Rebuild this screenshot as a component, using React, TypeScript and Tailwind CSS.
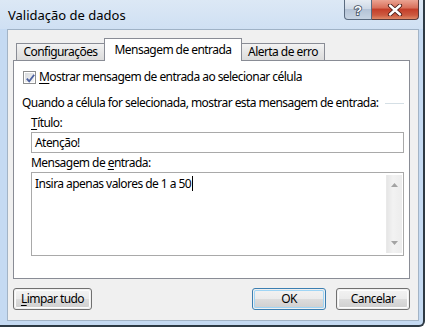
import React from "react";

const font = { fontFamily: '"Noto Sans", "Liberation Sans", sans-serif' };

function HelpBtn() {
  return (
    <div className="w-[28px] h-[20px] border border-t-0 border-[#5a6b80] rounded-bl-[4px] bg-[linear-gradient(#e6ecf3,#cfd9e6_45%,#b4c3d6_50%,#c7d4e3)] flex items-center justify-center">
      <svg width="12" height="14" viewBox="0 0 12 14">
        <text x="6" y="12" textAnchor="middle" fontSize="13" fontWeight="700" fontFamily="Liberation Sans, sans-serif" fill="#fff" stroke="#3b4a5c" strokeWidth="1.6" paintOrder="stroke">?</text>
      </svg>
    </div>
  );
}

function CloseBtn() {
  return (
    <div className="w-[47px] h-[20px] border border-t-0 border-l-0 border-[#5a3a3a] rounded-br-[4px] bg-[linear-gradient(#eba493,#d9715c_40%,#c43f2a_50%,#cc5a40_80%,#e08a68)] flex items-center justify-center">
      <svg width="16" height="12" viewBox="0 0 16 12">
        <path d="M3 1.5 L13 10.5 M13 1.5 L3 10.5" stroke="#4a1d17" strokeWidth="4.2" strokeLinecap="round" />
        <path d="M3 1.5 L13 10.5 M13 1.5 L3 10.5" stroke="#ffffff" strokeWidth="2.4" strokeLinecap="round" />
      </svg>
    </div>
  );
}

function Checkbox() {
  return (
    <div className="w-[13px] h-[13px] border border-[#8e8f8f] bg-white p-px">
      <div className="w-full h-full bg-[linear-gradient(135deg,#d9dbde,#f4f4f4)] relative">
        <svg className="absolute left-0 top-0" width="11" height="11" viewBox="0 0 11 11">
          <path d="M1.8 5.6 L4.2 8.4 L9.2 1.8" fill="none" stroke="#4c61a0" strokeWidth="1.8" />
        </svg>
      </div>
    </div>
  );
}

function Button({ children, def, w }: { children: React.ReactNode; def?: boolean; w: string }) {
  return (
    <div className={`${w} h-[22px] rounded-[3px] border ${def ? "border-[#3c7fb1]" : "border-[#707070]"} p-px`}>
      <div
        className={`w-full h-full rounded-[2px] flex items-center justify-center text-[12px] text-black bg-[linear-gradient(#f2f2f2,#ebebeb_50%,#dddddd_50%,#cfcfcf)] ${
          def ? "shadow-[inset_0_0_0_1px_#9fd5f5]" : "shadow-[inset_0_0_0_1px_#fcfcfc]"
        }`}
      >
        {children}
      </div>
    </div>
  );
}

export default function App() {
  return (
    <div
      style={font}
      className="w-[425px] h-[327px] bg-[#c5daf2] border-r-2 border-b-2 border-[#2e3a44] rounded-br-[6px] flex flex-col overflow-hidden"
    >
      {/* Title bar */}
      <div className="h-[29px] flex items-start bg-[linear-gradient(#dce8f5,#cfe0f3)]">
        <div className="pl-[8px] pt-[6px] text-[13px] leading-[18px] text-black">Validação de dados</div>
        <div className="ml-auto mr-[4px] flex">
          <HelpBtn />
          <CloseBtn />
        </div>
      </div>
      {/* Client */}
      <div className="ml-[7px] mr-[4px] h-[292px] bg-[#f0f0f0] border border-[#a3b4c6] border-t-[#9fb2c6] flex flex-col pl-[5px] pr-[8px] pt-[8px] text-[12px] tracking-[-0.55px] text-black">
        {/* Tabs */}
        <div className="flex items-end h-[22px] pl-[3px]">
          <div className="w-[88px] h-[17px] border border-r-0 border-b-0 border-[#898c95] bg-[linear-gradient(#f3f3f3,#e6e6e6_50%,#dcdcdc)] flex items-center justify-center leading-none">
            Configurações
          </div>
          <div className="relative z-10 -mb-px w-[138px] h-[23px] border border-b-0 border-[#898c95] bg-white flex items-center justify-center leading-none pb-[1px]">
            Mensagem de entrada
          </div>
          <div className="w-[83px] h-[17px] border border-l-0 border-b-0 border-[#898c95] bg-[linear-gradient(#f3f3f3,#e6e6e6_50%,#dcdcdc)] flex items-center justify-center leading-none">
            Alerta de erro
          </div>
        </div>
        {/* Panel */}
        <div className="h-[219px] border border-[#898c95] bg-white flex flex-col">
          <div className="mt-[9px] h-[14px] flex items-center pl-[9px]">
            <Checkbox />
            <span className="ml-[3px]">
              <span className="underline underline-offset-2">M</span>ostrar mensagem de entrada ao selecionar célula
            </span>
          </div>
          <div className="mt-[11px] h-[16px] flex items-center pl-[8px] pr-[5px]">
            <span className="whitespace-nowrap">Quando a célula for selecionada, mostrar esta mensagem de entrada:</span>
            <div className="flex-1 ml-[6px] h-px bg-[#d5dfe5]" />
          </div>
          <div className="ml-[17px] mr-[5px] flex flex-col">
            <div className="mt-[4px] h-[16px] flex items-center">
              <span>
                <span className="underline underline-offset-2">T</span>ítulo:
              </span>
            </div>
            <div className="mt-px h-[21px] border border-[#a9a9a9] flex items-center pl-[3px]">Atenção!</div>
            <div className="mt-[2px] h-[16px] flex items-center">
              <span>
                Mensagem de <span className="underline underline-offset-2">e</span>ntrada:
              </span>
            </div>
            <div className="mt-px h-[84px] border border-[#a9a9a9] flex p-[2px] pr-px">
              <div className="flex-1 pl-[1px] pt-px leading-[16px] flex items-start">
                <span>Insira apenas valores de 1 a 50</span>
                <span className="inline-block w-px h-[15px] bg-black ml-px" />
              </div>
              <div className="w-[16px] bg-[linear-gradient(90deg,#e6e6e6,#f2f2f2_40%,#ececec)] border-l border-[#e9e9e9] flex flex-col items-center justify-between py-[8px]">
                <svg width="7" height="4" viewBox="0 0 7 4"><path d="M0 4 L3.5 0 L7 4 Z" fill="#a3a3a3" /></svg>
                <svg width="7" height="4" viewBox="0 0 7 4"><path d="M0 0 L3.5 4 L7 0 Z" fill="#a3a3a3" /></svg>
              </div>
            </div>
          </div>
        </div>
        {/* Buttons */}
        <div className="mt-[9px] flex items-center">
          <Button w="w-[79px]">
            <span>
              <span className="underline underline-offset-2">L</span>impar tudo
            </span>
          </Button>
          <div className="ml-auto flex gap-[10px]">
            <Button w="w-[74px]" def>
              OK
            </Button>
            <Button w="w-[74px]">Cancelar</Button>
          </div>
        </div>
      </div>
    </div>
  );
}
